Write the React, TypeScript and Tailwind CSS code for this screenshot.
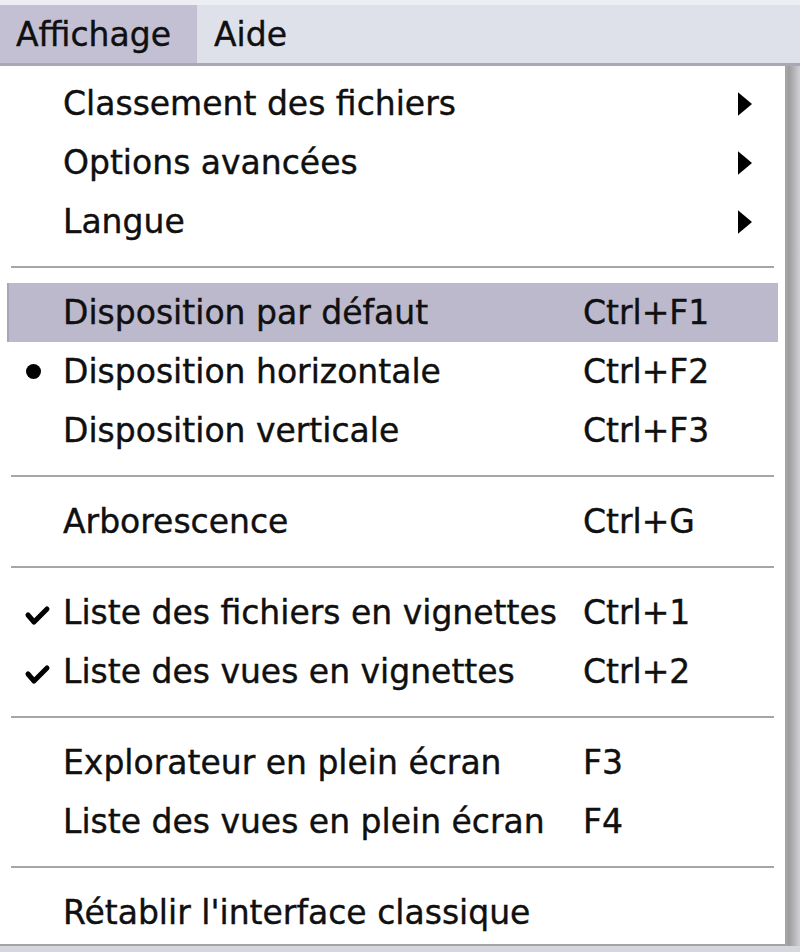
import { ReactNode } from 'react';

type Item =
  | { kind: 'sep' }
  | { kind: 'item'; label: string; shortcut?: string; sub?: boolean; mark?: 'dot' | 'check'; active?: boolean };

const items: Item[] = [
  { kind: 'item', label: 'Classement des fichiers', sub: true },
  { kind: 'item', label: 'Options avancées', sub: true },
  { kind: 'item', label: 'Langue', sub: true },
  { kind: 'sep' },
  { kind: 'item', label: 'Disposition par défaut', shortcut: 'Ctrl+F1', active: true },
  { kind: 'item', label: 'Disposition horizontale', shortcut: 'Ctrl+F2', mark: 'dot' },
  { kind: 'item', label: 'Disposition verticale', shortcut: 'Ctrl+F3' },
  { kind: 'sep' },
  { kind: 'item', label: 'Arborescence', shortcut: 'Ctrl+G' },
  { kind: 'sep' },
  { kind: 'item', label: 'Liste des fichiers en vignettes', shortcut: 'Ctrl+1', mark: 'check' },
  { kind: 'item', label: 'Liste des vues en vignettes', shortcut: 'Ctrl+2', mark: 'check' },
  { kind: 'sep' },
  { kind: 'item', label: 'Explorateur en plein écran', shortcut: 'F3' },
  { kind: 'item', label: 'Liste des vues en plein écran', shortcut: 'F4' },
  { kind: 'sep' },
  { kind: 'item', label: "Rétablir l'interface classique" },
];

function Mark({ type }: { type?: 'dot' | 'check' }): ReactNode {
  if (type === 'dot') return <span className="block w-[15px] h-[15px] rounded-full bg-black ml-[19px]" />;
  if (type === 'check')
    return (
      <svg width="28" height="24" viewBox="0 0 28 24" className="ml-[17px] mt-[6px]">
        <path d="M4 11 L10 18 L23 5" fill="none" stroke="#000" strokeWidth="5" strokeLinejoin="round" strokeLinecap="round" />
      </svg>
    );
  return null;
}

export default function App() {
  return (
    <div className="w-[800px] h-[952px] overflow-hidden bg-[#d6d6de] text-[#101010] font-['DejaVu_Sans',sans-serif] [-webkit-text-stroke:0.4px_#101010]">
      <div className="h-[66px] bg-[#dfe1ea] border-t-[5px] border-t-[#eceef4] border-b-[3px] border-b-[#a9a9b4] flex items-stretch text-[33px] leading-none">
        <div className="w-[197px] bg-[#c3c0d3] flex items-center pl-[16px]">Affichage</div>
        <div className="flex items-center pl-[17px]">Aide</div>
      </div>
      <div className="flex h-[880px]">
        <div className="w-[788px] bg-white border-r-[3px] border-r-[#a4a4a4] border-b-[2px] border-b-[#a4a4a4] pt-[8px] text-[33px] leading-none">
          {items.map((it, i) =>
            it.kind === 'sep' ? (
              <div key={i} className="h-[32px] flex items-center px-[11px]">
                <div className="h-[2px] w-full bg-[#a6a6a6]" />
              </div>
            ) : (
              <div
                key={i}
                className={`h-[59px] mx-[7px] flex items-center ${it.active ? 'bg-[#bcb9cd] border-l-[2px] border-l-[#a9a6bc]' : ''}`}
              >
                <div className={`${it.active ? 'w-[54px]' : 'w-[56px]'} shrink-0 flex items-center`}>
                  <Mark type={it.mark} />
                </div>
                <div className="w-[520px] shrink-0 whitespace-nowrap">{it.label}</div>
                <div className="w-[150px] shrink-0 whitespace-nowrap">{it.shortcut}</div>
                {it.sub && (
                  <svg viewBox="0 0 13 22" className="w-[14px] h-[24px] ml-[5px] shrink-0">
                    <path d="M0 0 L13 11 L0 22 Z" fill="#000" />
                  </svg>
                )}
              </div>
            )
          )}
        </div>
        <div className="w-[12px] bg-gradient-to-r from-[#9a9a9a] to-[#d0d0d6]" />
      </div>
    </div>
  );
}
